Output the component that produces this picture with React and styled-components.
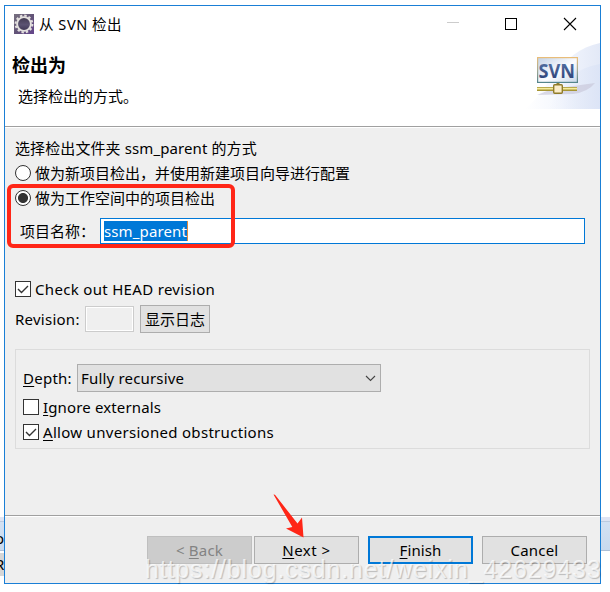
import React from "react";
import styled, { createGlobalStyle } from "styled-components";

const Global = createGlobalStyle`
  *, *::before, *::after { box-sizing: border-box; }
  body {
    margin: 0;
    background: #fff;
    overflow: hidden;
    color: #000;
    font: 15px/20px "Noto Sans", "Noto Sans CJK SC", sans-serif;
  }
`;

const Desktop = styled.div`
  position: relative;
  width: 610px;
  height: 592px;
  padding: 5px 9px 8px 4px;
  overflow: hidden;
`;

const BackWindow = styled.div`
  position: absolute;
  left: 0;
  top: 517px;
  width: 610px;
  height: 34px;
  padding-top: 10px;
  background: linear-gradient(#dfe4f3 4px, #bccbe0 4px, #bccbe0 5px, #d3e1f3 5px, #c8daee 33px, #aebfd6 33px);
`;

const BackRow = styled.div`
  position: absolute;
  left: 0;
  top: 553px;
  width: 5px;
  height: 23px;
  background: #d6d6d6;
`;

const Clipped = styled.span`
  display: block;
  margin-left: -5px;
  line-height: 22px;
`;

const Dialog = styled.div`
  position: relative;
  width: 597px;
  height: 579px;
  border: 1px solid #1a7fd6;
  background: #efefef;
  display: flex;
  flex-direction: column;
`;

const TitleBar = styled.div`
  display: flex;
  align-items: center;
  height: 36px;
  padding: 0 23px 0 9px;
  background: #fff;
`;

const Title = styled.div`
  flex: 1;
  margin-left: 5px;
  font-size: 14.5px;
  letter-spacing: 0.55px;
`;

const Controls = styled.div`
  display: flex;
  gap: 45px;
  svg { display: block; }
`;

const Header = styled.div`
  display: flex;
  justify-content: space-between;
  height: 86px;
  padding-top: 1px;
  background: #fff;
  border-bottom: 1px solid #fff;
  box-shadow: inset 0 -1px #a0a0a0;
`;

const Heading = styled.div`
  padding: 11px 0 0 7px;
  font-size: 18px;
  font-weight: 700;
  line-height: 22px;
`;

const Subtitle = styled.div`
  padding: 10px 0 0 13px;
`;

const Body = styled.div`
  flex: 1;
  padding: 10px 10px 0;
`;

const Row = styled.div`
  display: flex;
  align-items: center;
  height: ${(p) => p.$h}px;
  margin-top: ${(p) => p.$top || 0}px;
`;

const Text = styled.span`
  white-space: pre;
  letter-spacing: ${(p) => p.$ls || 0}px;
`;

const Key = styled.span`
  text-decoration: underline;
  text-underline-offset: 2px;
  text-decoration-thickness: 1px;
  text-decoration-skip-ink: none;
`;

const Radio = styled.span`
  width: 16px;
  height: 16px;
  margin-right: 4px;
  border: 1px solid #333;
  border-radius: 50%;
  background: ${(p) => (p.$on ? "radial-gradient(circle, #333 4.6px, #fff 5.4px)" : "#fff")};
`;

const Box = styled.span`
  display: flex;
  width: 16px;
  height: 16px;
  margin-right: 4px;
  border: 1px solid #333;
  background: #fff;
`;

const FieldLabel = styled.div`
  width: 85px;
  padding-left: 5px;
`;

const NameInput = styled.div`
  width: 485px;
  height: 26px;
  padding: 2px 3px;
  border: 1px solid #0078d7;
  background: #fff;
`;

const Selection = styled.div`
  width: 84px;
  height: 20px;
  background: #0078d7;
  border-right: 1px solid #e08a3c;
  color: #fff;
  line-height: 20px;
`;

const RevisionLabel = styled.div`
  width: 70px;
`;

const RevisionInput = styled.div`
  width: 49px;
  height: 26px;
  border: 1px solid #ccc;
  box-shadow: inset 0 0 0 1px #fff;
  margin-right: 6px;
`;

const Button = styled.div`
  display: flex;
  align-items: center;
  justify-content: center;
  width: ${(p) => p.$w || 105}px;
  height: 28px;
  margin-left: ${(p) => p.$gap || 0}px;
  border: ${(p) => (p.$primary ? "2px solid #0078d7" : "1px solid #adadad")};
  background: ${(p) => (p.$disabled ? "#ccc" : "#e1e1e1")};
  color: ${(p) => (p.$disabled ? "#838383" : "#000")};
  ${(p) => p.$disabled && "border-color: #bfbfbf;"}
`;

const Group = styled.div`
  width: 575px;
  height: 100px;
  margin-top: 16px;
  padding: 14px 7px 0;
  border: 1px solid #dcdcdc;
`;

const DepthLabel = styled.div`
  width: 54px;
`;

const Select = styled.div`
  display: flex;
  align-items: center;
  justify-content: space-between;
  width: 304px;
  height: 28px;
  padding: 0 4px 0 3px;
  border: 1px solid #adadad;
  background: #e1e1e1;
`;

const Footer = styled.div`
  display: flex;
  height: 68px;
  padding: 20px 13px 0 142px;
  border-top: 1px solid #a0a0a0;
  box-shadow: inset 0 1px #fff;
`;

const RedFrame = styled.div`
  position: absolute;
  left: 7px;
  top: 184px;
  width: 228px;
  height: 64px;
  border: 4px solid #ff2617;
  border-radius: 6px;
`;

const Arrow = styled.svg`
  position: absolute;
  left: 270px;
  top: 490px;
`;

const Watermark = styled.div`
  position: absolute;
  left: 145px;
  top: 555px;
  font: 25px/28px "Liberation Sans", Arial, sans-serif;
  letter-spacing: 0.84px;
  white-space: nowrap;
  color: rgba(255, 255, 255, 0.72);
  text-shadow: 1px 1px 1px rgba(0, 0, 0, 0.22);
`;

const Tick = () => (
  <svg width="14" height="14" viewBox="0 0 14 14" fill="none">
    <path d="M2 7l3.5 3.5L12 4" stroke="#333" strokeWidth="1.4" />
  </svg>
);

const Check = ({ on }) => <Box>{on && <Tick />}</Box>;

const GearIcon = () => (
  <svg width="20" height="20" viewBox="0 0 20 20">
    <defs>
      <linearGradient id="gearBack" x1="0" y1="0" x2="1" y2="1">
        <stop offset="0" stopColor="#77707f" />
        <stop offset="0.5" stopColor="#625477" />
        <stop offset="1" stopColor="#65458c" />
      </linearGradient>
      <linearGradient id="gearCore" x1="0" y1="0" x2="0" y2="1">
        <stop offset="0" stopColor="#40394f" />
        <stop offset="0.55" stopColor="#5b5372" />
        <stop offset="1" stopColor="#3c3451" />
      </linearGradient>
    </defs>
    <rect width="20" height="20" fill="url(#gearBack)" />
    <circle cx="10" cy="10" r="8.4" fill="none" stroke="#e4e1df" strokeWidth="2" strokeDasharray="2.4 2" />
    <circle cx="10" cy="10" r="6.9" fill="url(#gearCore)" stroke="#e4e1df" strokeWidth="1.9" />
  </svg>
);

const SvnBanner = () => (
  <svg width="75" height="66" viewBox="0 0 75 66">
    <defs>
      <linearGradient id="sweep" x1="0" x2="1">
        <stop offset="0" stopColor="#fff" />
        <stop offset="0.5" stopColor="#f3f6fd" />
        <stop offset="1" stopColor="#e3e9f7" />
      </linearGradient>
      <linearGradient id="sweepInner" x1="0" x2="1">
        <stop offset="0" stopColor="#e9eefa" stopOpacity="0" />
        <stop offset="1" stopColor="#dce4f6" />
      </linearGradient>
      <linearGradient id="panel" x1="0" y1="0" x2="1" y2="1">
        <stop offset="0" stopColor="#c3d3e7" />
        <stop offset="0.55" stopColor="#fbfcff" />
        <stop offset="1" stopColor="#c9d8ea" />
      </linearGradient>
      <linearGradient id="edge" x1="0" y1="0" x2="0" y2="1">
        <stop offset="0" stopColor="#e9bd79" />
        <stop offset="0.5" stopColor="#a6aa94" />
        <stop offset="1" stopColor="#55858c" />
      </linearGradient>
      <linearGradient id="letters" x1="0" y1="0" x2="0" y2="1">
        <stop offset="0" stopColor="#5d7dae" />
        <stop offset="1" stopColor="#25376f" />
      </linearGradient>
    </defs>
    <path d="M0 66C22 50 34 8 75 0V66Z" fill="url(#sweep)" />
    <path d="M24 66C36 40 50 25 75 21V66Z" fill="url(#sweepInner)" />
    <path d="M12 52L27 46L70 40Q63 49 48 51Z" fill="#c7c6d8" opacity="0.65" />
    <rect x="12.6" y="14.6" width="39.8" height="24.8" fill="url(#panel)" stroke="url(#edge)" strokeWidth="1.2" />
    <text x="13.5" y="35" textLength="36.5" lengthAdjust="spacingAndGlyphs" fontFamily="Open Sans" fontWeight="700" fontSize="19.5" fill="url(#letters)">SVN</text>
    <path d="M33 40v3" stroke="#8f8135" strokeWidth="3" />
    <rect x="12" y="44" width="40" height="4" fill="#a69534" />
    <path d="M12 45.6H52" stroke="#f5ec9d" strokeWidth="1.6" />
    <rect x="28.7" y="41.7" width="8.6" height="8.6" rx="1" fill="#faecc9" stroke="#8f7b28" strokeWidth="1.4" />
  </svg>
);

export default function App() {
  return (
    <Desktop>
      <Global />
      <BackWindow><Clipped>o</Clipped></BackWindow>
      <BackRow><Clipped>R</Clipped></BackRow>
      <Dialog>
        <TitleBar>
          <GearIcon />
          <Title>从 SVN 检出</Title>
          <Controls>
            <svg width="14" height="14"><path d="M2 5.5h12" stroke="#ccc" /></svg>
            <svg width="14" height="14"><rect x="1.5" y="1.5" width="11" height="11" fill="none" stroke="#000" /></svg>
            <svg width="14" height="14"><path d="M1 1l12 12M13 1L1 13" stroke="#000" strokeWidth="1.1" /></svg>
          </Controls>
        </TitleBar>
        <Header>
          <div>
            <Heading>检出为</Heading>
            <Subtitle>选择检出的方式。</Subtitle>
          </div>
          <SvnBanner />
        </Header>
        <Body>
          <Row $h={20}><Text $ls={0.1}>选择检出文件夹 ssm_parent 的方式</Text></Row>
          <Row $h={20} $top={5}><Radio /><Text>做为新项目检出，并使用新建项目向导进行配置</Text></Row>
          <Row $h={20} $top={5}><Radio $on /><Text>做为工作空间中的项目检出</Text></Row>
          <Row $h={26} $top={10}>
            <FieldLabel>项目名称：</FieldLabel>
            <NameInput><Selection><Text $ls={0.12}>ssm_parent</Text></Selection></NameInput>
          </Row>
          <Row $h={20} $top={35}><Check on /><Text $ls={0.32}>Check out HEAD revision</Text></Row>
          <Row $h={28} $top={6}>
            <RevisionLabel><Text $ls={0.25}>Revision:</Text></RevisionLabel>
            <RevisionInput />
            <Button $w={70}>显示日志</Button>
          </Row>
          <Group>
            <Row $h={28}>
              <DepthLabel><Text $ls={0.25}><Key>D</Key>epth:</Text></DepthLabel>
              <Select>
                <Text $ls={0.18}>Fully recursive</Text>
                <svg width="11" height="7"><path d="M1 1l4.5 4.5L10 1" fill="none" stroke="#444" strokeWidth="1.1" /></svg>
              </Select>
            </Row>
            <Row $h={20} $top={5}><Check /><Text $ls={0.14}><Key>I</Key>gnore externals</Text></Row>
            <Row $h={20} $top={5}><Check on /><Text $ls={0.3}><Key>A</Key>llow unversioned obstructions</Text></Row>
          </Group>
        </Body>
        <Footer>
          <Button $disabled><Text $ls={0.2}>&lt; <Key>B</Key>ack</Text></Button>
          <Button $gap={2}><Text $ls={0.5}><Key>N</Key>ext &gt;</Text></Button>
          <Button $gap={9} $primary><Text $ls={0.1}><Key>F</Key>inish</Text></Button>
          <Button $gap={9}><Text $ls={0.2}>Cancel</Text></Button>
        </Footer>
      </Dialog>
      <RedFrame />
      <Arrow width="40" height="50">
        <path d="M3.5 4.5L5 4.8L27.5 33.5L32 27.5L33.5 47.5L16 38.5L22.3 37Z" fill="#ff2617" />
      </Arrow>
      <Watermark>https://blog.csdn.net/weixin_42629433</Watermark>
    </Desktop>
  );
}
